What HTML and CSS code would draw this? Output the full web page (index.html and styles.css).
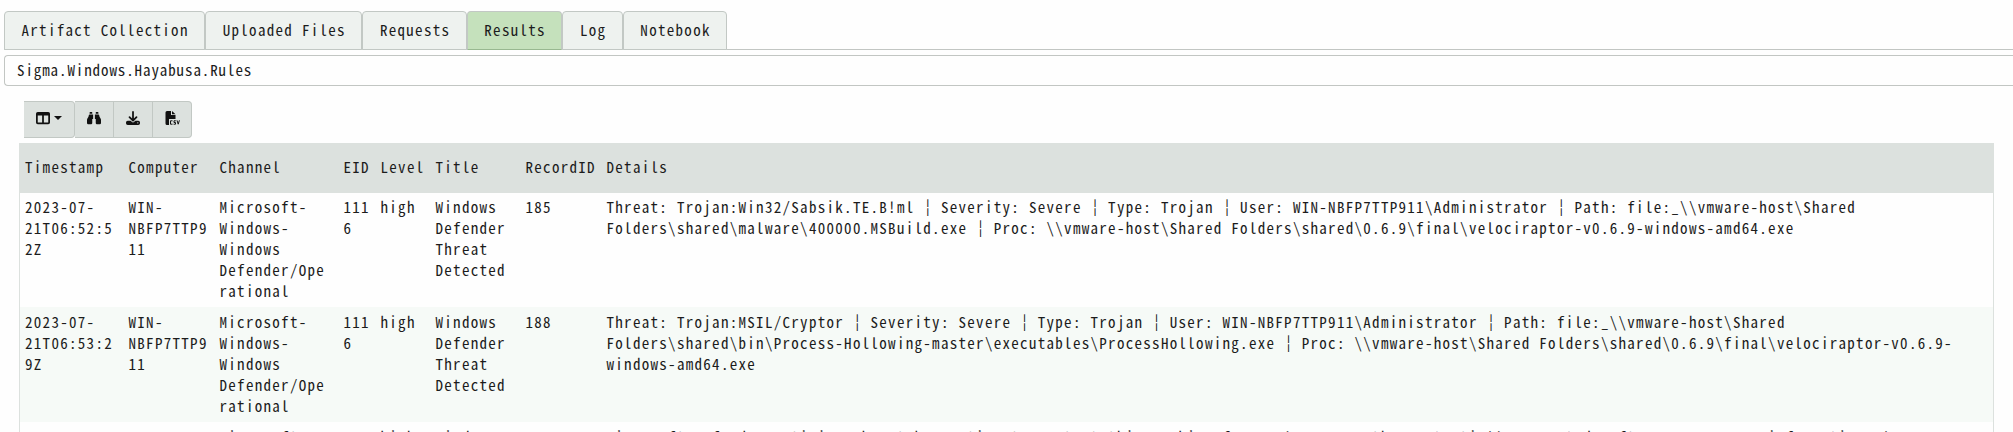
FILE: index.html
```
<!DOCTYPE html>
<html lang="en">
<head><meta charset="utf-8"><title>Results</title><link rel="stylesheet" href="styles.css"></head>
<body>
<nav class="tabs">
<a class="tab">Artifact Collection</a><a class="tab">Uploaded Files</a><a class="tab">Requests</a><a class="tab active">Results</a><a class="tab">Log</a><a class="tab">Notebook</a>
</nav>
<div class="select">Sigma.Windows.Hayabusa.Rules</div>
<div class="toolbar">
<button class="btn columns"><svg width="14" height="14" viewBox="0 0 512 512"><path fill-rule="evenodd" d="M64 32H448a64 64 0 0 1 64 64V416a64 64 0 0 1-64 64H64a64 64 0 0 1-64-64V96a64 64 0 0 1 64-64ZM64 160V416H224V160ZM288 160V416H448V160Z"/></svg><span class="caret"></span></button>
<button class="btn"><svg width="14" height="14" viewBox="0 0 512 512"><path d="M416 48c0-9-7-16-16-16h-64c-9 0-16 7-16 16v48h96ZM64 160C61 231 3 250 0 320v128c0 18 14 32 32 32h128c18 0 32-14 32-32V288h32V128H96c-18 0-32 14-32 32ZM448 160c0-18-14-32-32-32H288v160h32v160c0 18 14 32 32 32h128c18 0 32-14 32-32V320c-3-70-61-89-64-160ZM176 32h-64c-9 0-16 7-16 16v48h96V48c0-9-7-16-16-16Z"/></svg></button>
<button class="btn"><svg width="14" height="14" viewBox="0 0 512 512"><path fill-rule="evenodd" d="M288 32a32 32 0 0 0-64 0v243l-73-73a32 32 0 0 0-46 46l128 128a32 32 0 0 0 46 0l128-128a32 32 0 0 0-46-46l-73 73ZM64 352a64 64 0 0 0-64 64v32a64 64 0 0 0 64 64H448a64 64 0 0 0 64-64V416a64 64 0 0 0-64-64H347l-46 45a64 64 0 0 1-90 0l-46-45ZM432 408a24 24 0 1 1 0 48a24 24 0 0 1 0-48Z"/></svg></button>
<button class="btn last"><svg width="15" height="15" viewBox="0 0 15 15"><path d="M2 0H6V4H10.500V8H4V14H2Q.5 14 .5 12.500V1.500Q.5 0 2 0ZM7 0L10.500 3.200H7Z"/><path class="csv" d="M7.500 9.800H5.500V13.200H7.500M10.800 9.800H9V11.500H10.500V13.200H8.600M12 9.300L13.200 13.200L14.400 9.300"/></svg></button>
</div>
<table class="results">
<colgroup><col class="c1"><col class="c2"><col class="c3"><col class="c4"><col class="c5"><col class="c6"><col class="c7"><col></colgroup>
<thead><tr><th>Timestamp</th><th>Computer</th><th>Channel</th><th>EID</th><th>Level</th><th>Title</th><th>RecordID</th><th>Details</th></tr></thead>
<tbody>
<tr><td>2023-07-21T06:52:52Z</td><td>WIN-NBFP7TTP911</td><td class="channel">Microsoft-Windows-Windows Defender/Operational</td><td>1116</td><td>high</td><td>Windows Defender Threat Detected</td><td>185</td><td>Threat: Trojan:Win32/Sabsik.TE.B!ml <span class="bar">¦</span> Severity: Severe <span class="bar">¦</span> Type: Trojan <span class="bar">¦</span> User: WIN-NBFP7TTP911\Administrator <span class="bar">¦</span> Path: file:_\\vmware-host\Shared<br>Folders\shared\malware\400000.MSBuild.exe <span class="bar">¦</span> Proc: \\vmware-host\Shared Folders\shared\0.6.9\final\velociraptor-v0.6.9-windows-amd64.exe</td></tr>
<tr><td>2023-07-21T06:53:29Z</td><td>WIN-NBFP7TTP911</td><td class="channel">Microsoft-Windows-Windows Defender/Operational</td><td>1116</td><td>high</td><td>Windows Defender Threat Detected</td><td>188</td><td>Threat: Trojan:MSIL/Cryptor <span class="bar">¦</span> Severity: Severe <span class="bar">¦</span> Type: Trojan <span class="bar">¦</span> User: WIN-NBFP7TTP911\Administrator <span class="bar">¦</span> Path: file:_\\vmware-host\Shared<br>Folders\shared\bin\Process-Hollowing-master\executables\ProcessHollowing.exe <span class="bar">¦</span> Proc: \\vmware-host\Shared Folders\shared\0.6.9\final\velociraptor-v0.6.9-<br>windows-amd64.exe</td></tr>
<tr><td>2023-07-21T06:53:29Z</td><td>WIN-NBFP7TTP911</td><td class="channel">Microsoft-Windows-Windows Defender/Operational</td><td>1116</td><td>high</td><td>Windows Defender Threat Detected</td><td>188</td><td>Microsoft Defender Antivirus has taken action to protect this machine from malware or other potentially unwanted software. For more information please see<br>the following:</td></tr>
</tbody>
</table>
</body>
</html>
```
FILE: styles.css
```
* { box-sizing: border-box; }
html { overflow: hidden; }
body { margin: 0; height: 432px; overflow: hidden; background: #fefefe; color: #1c1c1c; font: 15px/21px "Noto Sans Mono CJK SC", "Liberation Mono", monospace; letter-spacing: 1.3px; }
.tabs { display: flex; height: 39px; margin: 11px 0 0 4px; border-bottom: 1px solid #c2c6c3; }
.tab { height: 39px; padding: 7px 15.500px 8px 16.500px; border: 1px solid #c2c8c4; border-radius: 4px 4px 0 0; background: #eef2ef; white-space: nowrap; }
.tab.active { background: #c5e1bc; border-bottom-color: #98b890; }
.select { height: 31px; margin: 5px 0 0 4px; padding: 3px 12px; border: 1px solid #c2c6c3; border-right: 0; border-radius: 4px 0 0 4px; letter-spacing: .9px; }
.toolbar { display: flex; margin: 15px 0 0 24px; height: 37px; }
.btn { display: flex; align-items: center; justify-content: center; width: 39px; height: 37px; padding: 0 0 3px; border: 1px solid #c2c8c4; border-left: 0; background: #dce1de; }
.btn.columns { width: 51px; gap: 4px; border-radius: 0 4px 4px 0; }
.btn.last { border-radius: 0 4px 4px 0; }
.btn svg { fill: #111; }
.btn .csv { fill: none; stroke: #111; stroke-width: 1; }
.caret { border: 4px solid transparent; border-top-color: #111; border-bottom: 0; }
.results { width: 1975px; margin: 5px 0 0 19px; table-layout: fixed; border-collapse: separate; border-spacing: 0; border: 1px solid #dce1de; border-top: 0; }
th { height: 50px; padding: 0 4px 3px 5.500px; background: #dce1de; font-weight: 400; text-align: left; white-space: nowrap; }
td { height: 115px; padding: 4px 4px 0 5.500px; vertical-align: top; overflow-wrap: anywhere; }
td:first-child, th:first-child { padding-left: 5px; }
td.channel { padding-right: 10px; }
tbody tr:first-child td { height: 114px; padding-top: 3px; }
tbody tr:nth-child(even) { background: #f6faf7; }
.bar { display: inline-block; width: 8.800px; text-align: center; letter-spacing: 0; line-height: 20px; vertical-align: top; }
.c1 { width: 103px; } .c2 { width: 91px; } .c3 { width: 124px; } .c4 { width: 37px; } .c5 { width: 55px; } .c6 { width: 90px; } .c7 { width: 81px; }
```
